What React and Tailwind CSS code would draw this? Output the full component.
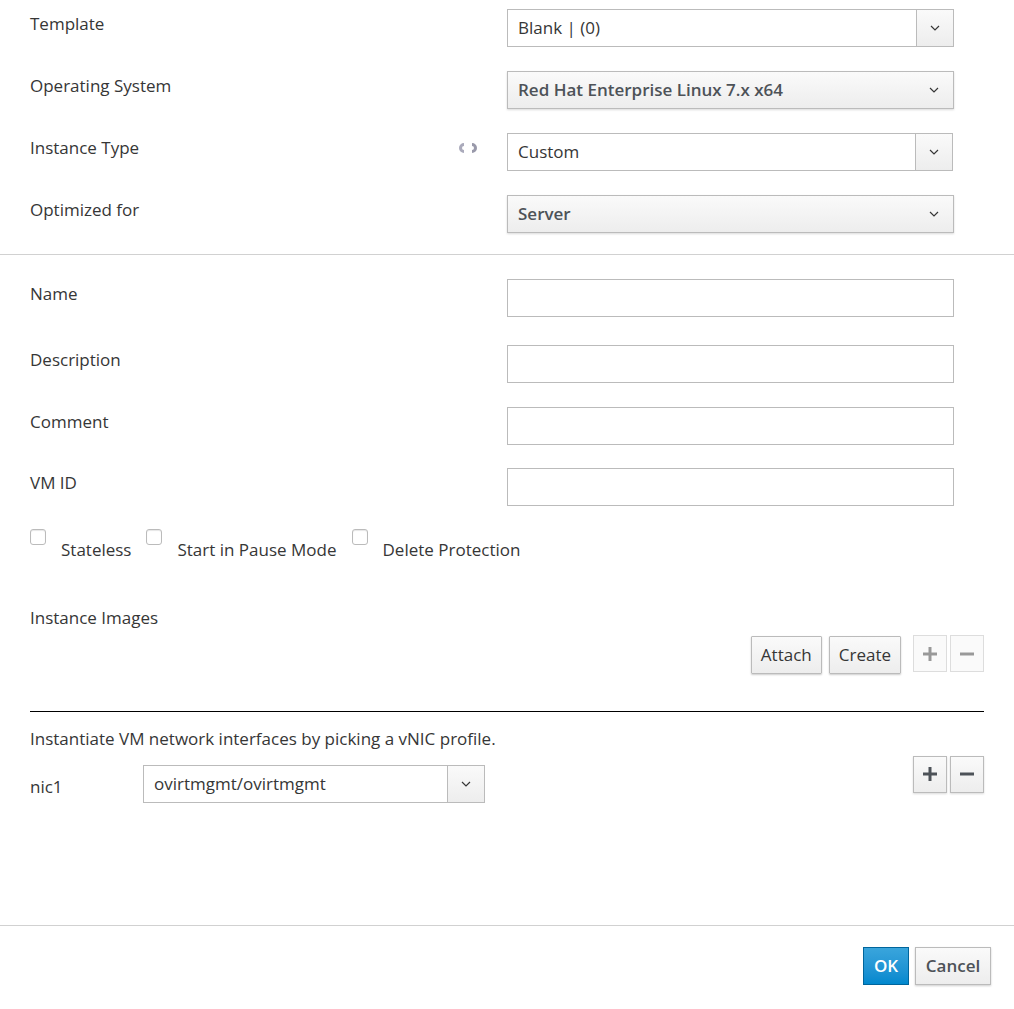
const F = { fontFamily: '"Open Sans", sans-serif' };

function Chev() {
  return (
    <svg width="10" height="6" viewBox="0 0 10 6"><path d="M1 1l4 4 4-4" fill="none" stroke="#363636" strokeWidth="1.2" /></svg>
  );
}

function SplitSelect({ value, w = "w-[447px]" }) {
  return (
    <div className={`flex h-[38px] ${w} border border-[#bbb] bg-white`}>
      <div className="flex-1 flex items-center px-[10px] text-[17px] text-[#363636]">{value}</div>
      <div className="w-[37px] flex items-center justify-center border-l border-[#bbb] bg-gradient-to-b from-[#fafafa] to-[#ededed]"><Chev /></div>
    </div>
  );
}

function BtnSelect({ value }) {
  return (
    <div className="flex h-[38px] w-[447px] items-center justify-between border border-[#bbb] bg-gradient-to-b from-[#fafafa] to-[#ededed] px-[10px] shadow-[0_1px_2px_rgba(0,0,0,0.15)] text-[17px] font-semibold text-[#4d5258]">
      <span>{value}</span>
      <span className="mr-[4px]"><Chev /></span>
    </div>
  );
}

function Row({ label, children, icon, h = "h-[62px]" }) {
  return (
    <div className={`flex ${h}`}>
      <div className="w-[507px] pl-[30px] pt-[11px] text-[17px] text-[#363636] flex">
        <span className="flex-1">{label}</span>
        {icon}
      </div>
      <div className="pt-[9px]">{children}</div>
    </div>
  );
}

function Input() {
  return <div className="h-[38px] w-[447px] border border-[#bbb] bg-white" />;
}

function Cb({ label }) {
  return (
    <div className="flex items-start">
      <div className="w-[16px] h-[16px] mt-[-8px] border border-[#bbb] rounded-[3px] bg-white shadow-[inset_0_1px_1px_rgba(0,0,0,0.1)]" />
      <span className="ml-[15px] mr-[15px] text-[17px] text-[#363636]">{label}</span>
    </div>
  );
}

function PmBtn({ sym, faded }) {
  return (
    <div className={`w-[34px] h-[37px] flex items-center justify-center border ${faded ? "border-[#ddd] bg-[#fafafa]" : "border-[#bbb] bg-gradient-to-b from-[#fafafa] to-[#ededed] shadow-[0_1px_2px_rgba(0,0,0,0.15)]"}`}>
      <svg width="14" height="14" viewBox="0 0 14 14">
        {sym === "+" && <rect x="5.5" y="0" width="3" height="14" fill={faded ? "#999" : "#4d5258"} />}
        <rect x="0" y="5.5" width="14" height="3" fill={faded ? "#999" : "#4d5258"} />
      </svg>
    </div>
  );
}

export default function App() {
  return (
    <div style={F} className="w-[1014px] h-[1009px] bg-white relative text-[#363636]">
      <div className="h-[254px]">
        <Row label="Template"><SplitSelect value="Blank |  (0)" /></Row>
        <Row label="Operating System"><BtnSelect value="Red Hat Enterprise Linux 7.x x64" /></Row>
        <Row label="Instance Type" icon={
          <svg width="26" height="12" viewBox="0 0 26 12" className="mt-[7px] mr-[26px]">
            <path d="M9 2.5a3.5 3.5 0 1 0 0 7" fill="none" stroke="#aab" strokeWidth="3" />
            <path d="M17 2.5a3.5 3.5 0 1 1 0 7" fill="none" stroke="#99a" strokeWidth="3" />
          </svg>
        }><SplitSelect value="Custom" w="w-[446px]" /></Row>
        <Row label="Optimized for"><BtnSelect value="Server" /></Row>
      </div>
      <div className="border-t border-[#d1d1d1]" />
      <div className="pt-[15px]">
        <Row label="Name" h="h-[66px]"><Input /></Row>
        <Row label="Description"><Input /></Row>
        <Row label="Comment" h="h-[61px]"><Input /></Row>
        <Row label="VM ID"><Input /></Row>
      </div>
      <div className="flex pl-[30px] mt-[16px]">
        <Cb label="Stateless" /><Cb label="Start in Pause Mode" /><Cb label="Delete Protection" />
      </div>
      <div className="pl-[30px] mt-[42px] text-[17px]">Instance Images</div>
      <div className="flex justify-end items-start gap-[7px] pr-[30px] mt-[6px]">
        <div className="h-[38px] px-[9px] flex items-center border border-[#bbb] rounded-[1px] bg-gradient-to-b from-[#fafafa] to-[#ededed] shadow-[0_1px_2px_rgba(0,0,0,0.2)] text-[17px] text-[#363636]">Attach</div>
        <div className="h-[38px] px-[9px] mr-[5px] flex items-center border border-[#bbb] rounded-[1px] bg-gradient-to-b from-[#fafafa] to-[#ededed] shadow-[0_1px_2px_rgba(0,0,0,0.2)] text-[17px] text-[#363636]">Create</div>
        <div className="flex gap-[3px] mt-[-1px]"><PmBtn sym="+" faded /><PmBtn sym="-" faded /></div>
      </div>
      <div className="mx-[30px] mt-[37px] border-t border-black" />
      <div className="pl-[30px] mt-[14px] text-[17px]">Instantiate VM network interfaces by picking a vNIC profile.</div>
      <div className="flex items-start pl-[30px] pr-[30px]">
        <div className="w-[113px] pt-[22px] text-[17px]">nic1</div>
        <div className="pt-[13px]"><SplitSelect value="ovirtmgmt/ovirtmgmt" w="w-[342px]" /></div>
        <div className="flex-1" />
        <div className="flex gap-[3px] pt-[4px]"><PmBtn sym="+" /><PmBtn sym="-" /></div>
      </div>
      <div className="absolute left-0 right-0 top-[925px] border-t border-[#d1d1d1]" />
      <div className="absolute top-[947px] right-[23px] flex gap-[6px]">
        <div className="h-[38px] w-[46px] flex items-center justify-center border border-[#00659c] bg-gradient-to-b from-[#39a5dc] to-[#0088ce] text-white text-[17px] font-semibold">OK</div>
        <div className="h-[38px] w-[76px] flex items-center justify-center border border-[#bbb] bg-gradient-to-b from-[#fafafa] to-[#ededed] shadow-[0_1px_2px_rgba(0,0,0,0.2)] text-[17px] font-semibold text-[#4d5258]">Cancel</div>
      </div>
    </div>
  );
}
